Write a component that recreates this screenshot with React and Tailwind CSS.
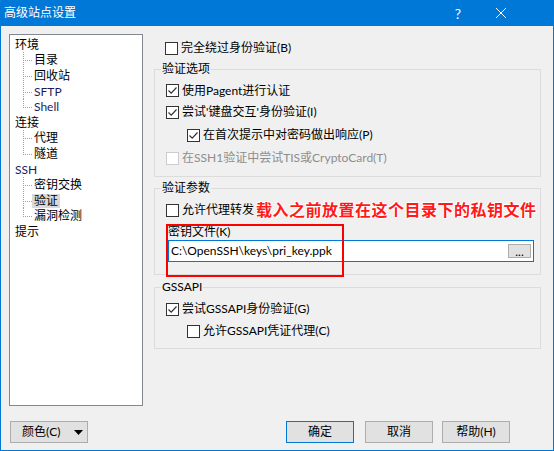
import React from "react";

const FONT = { fontFamily: 'Lato, "Noto Sans CJK SC", sans-serif' };

const TREE = [
  { label: "环境", level: 0 },
  { label: "目录", level: 1 },
  { label: "回收站", level: 1 },
  { label: "SFTP", level: 1, navy: true },
  { label: "Shell", level: 1, navy: true, last: true },
  { label: "连接", level: 0 },
  { label: "代理", level: 1 },
  { label: "隧道", level: 1, last: true },
  { label: "SSH", level: 0, navy: true },
  { label: "密钥交换", level: 1 },
  { label: "验证", level: 1, selected: true },
  { label: "漏洞检测", level: 1, last: true },
  { label: "提示", level: 0 },
];

function Connector({ last }) {
  return (
    <svg width="9" height="16" className="shrink-0 overflow-visible">
      <line x1="0.5" y1="0" x2="0.5" y2={last ? 8 : 16} stroke="#a0a0a0" strokeDasharray="1 1" />
      <line x1="0" y1="8.5" x2="9" y2="8.5" stroke="#a0a0a0" strokeDasharray="1 1" />
    </svg>
  );
}

function TreeRow({ item }) {
  return (
    <div className="flex items-center h-[15.6px] pl-[5px]">
      {item.level === 1 && <div className="w-[8px] shrink-0" />}
      {item.level === 1 && <Connector last={item.last} />}
      <span
        className={
          "leading-[14px] " +
          (item.level === 1 ? "px-[2px] " : "") +
          (item.selected ? "bg-[#d9d9d9] " : "") +
          (item.navy ? "text-[#1c1c5c]" : "text-black")
        }
      >
        {item.label}
      </span>
    </div>
  );
}

function Checkbox({ checked, disabled }) {
  return (
    <div
      className={
        "w-[13px] h-[13px] shrink-0 border bg-white flex items-center justify-center " +
        (disabled ? "border-[#cccccc]" : "border-[#333333]")
      }
    >
      {checked && (
        <svg width="11" height="11" viewBox="0 0 11 11">
          <path d="M1.5 5.5 L4.2 8.2 L9.5 2.5" fill="none" stroke="#333333" strokeWidth="1.2" />
        </svg>
      )}
    </div>
  );
}

function CheckRow({ label, checked, disabled, indent, h = "h-[22px]", children }) {
  return (
    <div className={"flex items-center " + h + " " + (indent ? "pl-[32px]" : "pl-[11px]")}>
      <Checkbox checked={checked} disabled={disabled} />
      <span className={"ml-[3px] whitespace-nowrap " + (disabled ? "text-[#8d8d8d]" : "text-black")}>
        {label}
      </span>
      {children}
    </div>
  );
}

function Group({ title, className = "", children }) {
  return (
    <fieldset className={"border border-[#dcdcdc] " + className}>
      <legend className="ml-[6px] px-[1px] leading-[16px] text-black">{title}</legend>
      {children}
    </fieldset>
  );
}

function Button({ children, primary, className = "" }) {
  return (
    <button
      className={
        "h-[22px] bg-[#e1e1e1] border flex items-center justify-center text-black " +
        (primary ? "border-[#0078d7] " : "border-[#adadad] ") +
        className
      }
    >
      {children}
    </button>
  );
}

export default function App() {
  return (
    <div
      style={FONT}
      className="w-[554px] h-[451px] bg-[#f0f0f0] border border-t-0 border-[#0078d7] flex flex-col text-[12px] overflow-hidden"
    >
      {/* Title bar */}
      <div className="h-[26px] bg-[#0078d7] flex items-center text-white shrink-0">
        <span className="ml-[3px] text-[12px]">高级站点设置</span>
        <span className="ml-auto text-[14px] mr-[35px]">?</span>
        <svg width="10" height="10" className="mr-[47px]">
          <path d="M0 0 L10 10 M10 0 L0 10" stroke="white" strokeWidth="1" />
        </svg>
      </div>

      {/* Main */}
      <div className="flex items-start mt-[8px]">
        <div className="ml-[8px] w-[134px] h-[372px] bg-white border border-[#828790] pt-[2px] shrink-0">
          {TREE.map((item) => (
            <TreeRow key={item.label} item={item} />
          ))}
        </div>

        <div className="ml-[11px] w-[387px] flex flex-col">
          <div className="pt-[3px]">
            <CheckRow label="完全绕过身份验证(B)" />
          </div>

          <Group title="验证选项" className="mt-[2px] pb-[7px]">
            <div className="pt-[3px]">
              <CheckRow label="使用Pagent进行认证" checked h="h-[21px]" />
              <CheckRow label="尝试'键盘交互'身份验证(I)" checked />
              <CheckRow label="在首次提示中对密码做出响应(P)" checked indent h="h-[24px]" />
              <CheckRow label="在SSH1验证中尝试TIS或CryptoCard(T)" disabled />
            </div>
          </Group>

          <Group title="验证参数" className="mt-[3px] pb-[12px]">
            <div className="pt-[3px]">
              <CheckRow label="允许代理转发">
                <span
                  className="ml-[2px] text-[16px] font-bold text-[#ff1a1a] tracking-[0.5px] whitespace-nowrap"
                  style={{ textShadow: "0 0 2px #fff, 0 0 2px #fff, 1px 1px 0 #fff, -1px -1px 0 #fff" }}
                >
                  载入之前放置在这个目录下的私钥文件
                </span>
              </CheckRow>
            </div>
            <div className="relative ml-[13px] w-[366px] mt-[3px]">
              <div className="h-[16px] leading-[16px] text-black">密钥文件(K)</div>
              <div className="h-[22px] bg-white border border-[#0078d7] flex items-center pl-[2px] pr-[2px]">
                <span className="text-black">C:\OpenSSH\keys\pri_key.ppk</span>
                <div className="ml-auto w-[23px] h-[14px] bg-[#e1e1e1] border border-[#adadad] flex items-end justify-center leading-[10px] text-black">
                  ...
                </div>
              </div>
              {/* annotation box */}
              <div className="absolute left-[-2px] top-0 w-[178px] h-[53px] border-2 border-[#ff0000]" />
            </div>
          </Group>

          <Group title="GSSAPI" className="mt-[4px] pb-[6px]">
            <div className="pt-[3px]">
              <CheckRow label="尝试GSSAPI身份验证(G)" checked />
              <CheckRow label="允许GSSAPI凭证代理(C)" indent />
            </div>
          </Group>
        </div>
      </div>

      {/* Bottom buttons */}
      <div className="flex items-center mt-[15px]">
        <Button className="ml-[9px] w-[78px] justify-start pl-[11px]">
          <span>颜色(C)</span>
          <svg width="9" height="5" className="ml-[14px]">
            <path d="M0 0 L9 0 L4.5 5 Z" fill="#000" />
          </svg>
        </Button>
        <Button primary className="ml-[198px] w-[68px]">确定</Button>
        <Button className="ml-[11px] w-[68px]">取消</Button>
        <Button className="ml-[9px] w-[68px]">帮助(H)</Button>
      </div>
    </div>
  );
}
